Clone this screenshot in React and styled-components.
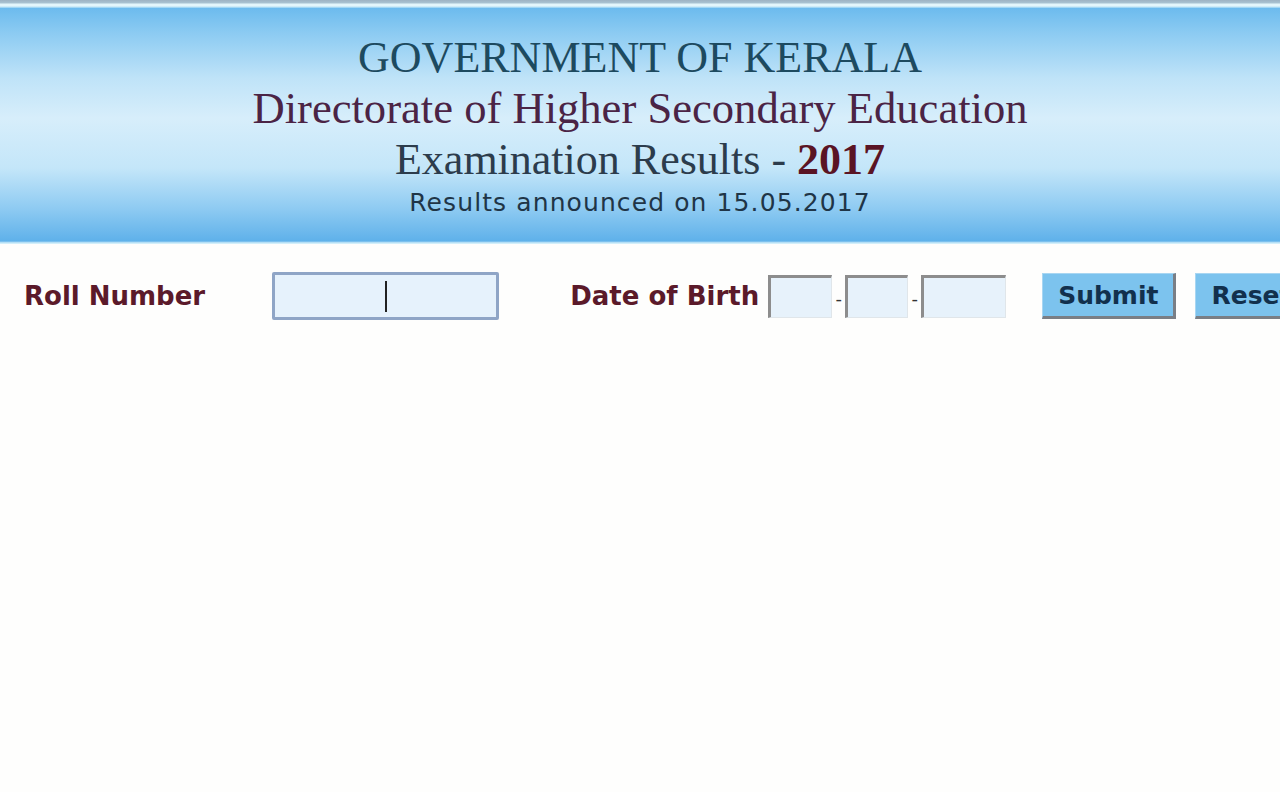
import React from 'react';
import styled, { createGlobalStyle } from 'styled-components';

const GlobalStyle = createGlobalStyle`
  html, body {
    margin: 0;
    padding: 0;
    background: #fefefd;
  }
  body {
    font-family: "Liberation Serif", "Times New Roman", serif;
    overflow: hidden;
  }
`;

const Page = styled.div`
  width: 1280px;
  height: 792px;
  background: #fefefd;
  overflow: hidden;
`;

const TopStrip = styled.div`
  height: 8px;
  background: linear-gradient(to bottom, #9db3c3 0px, #a9c3d2 3px, #e3f6fb 4px, #e3f6fb 6px, #8ccdf2 8px);
`;

const Banner = styled.header`
  height: 236px;
  box-sizing: border-box;
  padding-top: 24px;
  text-align: center;
  background: linear-gradient(
    to bottom,
    #6cbbee 0px,
    #8ccbf2 25px,
    #bfe3f8 70px,
    #d7eefb 110px,
    #c4e6f9 160px,
    #8fcbf2 200px,
    #5fb1ea 233px,
    #d3effa 235px
  );
`;

const Title = styled.div`
  font-family: "Liberation Serif", "Times New Roman", serif;
  font-size: ${p => p.size || 44}px;
  line-height: 51px;
  color: ${p => p.color};
  white-space: nowrap;
`;

const Year = styled.b`
  color: #5a1424;
`;

const Announce = styled.div`
  font-family: "DejaVu Sans", Verdana, sans-serif;
  font-size: 25px;
  letter-spacing: 1.1px;
  line-height: 30px;
  color: #1f3547;
  margin-top: 3px;
`;

const FormRow = styled.div`
  display: flex;
  align-items: center;
  padding: 28px 0 0 24px;
  white-space: nowrap;
  & > * {
    flex-shrink: 0;
  }
`;

const Label = styled.span`
  font-family: "DejaVu Sans", Tahoma, sans-serif;
  font-weight: bold;
  font-size: 26px;
  color: #5b1a2a;
  margin-right: ${p => p.gap || 0}px;
`;

const RollInput = styled.div`
  position: relative;
  width: 227px;
  height: 48px;
  box-sizing: border-box;
  border: 3px solid #8fa5c6;
  border-radius: 2px;
  background: #e6f2fc;
  margin-right: 71px;
`;

const Caret = styled.span`
  position: absolute;
  left: 110px;
  top: 6px;
  width: 2px;
  height: 31px;
  background: #222;
`;

const DobBox = styled.div`
  width: ${p => p.w}px;
  height: 43px;
  box-sizing: border-box;
  border-top: 3px solid #8d8d8d;
  border-left: 3px solid #8d8d8d;
  border-right: 1px solid #e0e6ea;
  border-bottom: 1px solid #e0e6ea;
  background: #e7f2fb;
`;

const Dash = styled.span`
  font-family: "DejaVu Sans", sans-serif;
  font-size: 18px;
  color: #333;
  width: 13px;
  text-align: center;
  margin-top: 4px;
`;

const Button = styled.button`
  height: 46px;
  padding: 0 15px;
  margin-left: ${p => p.gap}px;
  border: none;
  border-right: 3px solid #7a7f86;
  border-bottom: 3px solid #7a7f86;
  border-top: 1px solid #a8d6f2;
  border-left: 1px solid #a8d6f2;
  background: #7cc3ee;
  font-family: "DejaVu Sans", Tahoma, sans-serif;
  font-weight: bold;
  font-size: 25px;
  color: #12304d;
`;

export default function App() {
  return (
    <Page>
      <GlobalStyle />
      <TopStrip />
      <Banner>
        <Title color="#1d4a5f">GOVERNMENT OF KERALA</Title>
        <Title color="#4b2445" size={44.6}>Directorate of Higher Secondary Education</Title>
        <Title color="#2c3c4c">
          Examination Results - <Year>2017</Year>
        </Title>
        <Announce>Results announced on 15.05.2017</Announce>
      </Banner>
      <FormRow>
        <Label gap={67}>Roll Number</Label>
        <RollInput>
          <Caret />
        </RollInput>
        <Label gap={9}>Date of Birth</Label>
        <DobBox w={64} />
        <Dash>-</Dash>
        <DobBox w={63} />
        <Dash>-</Dash>
        <DobBox w={85} />
        <Button gap={36}>Submit</Button>
        <Button gap={19}>Reset</Button>
      </FormRow>
    </Page>
  );
}
